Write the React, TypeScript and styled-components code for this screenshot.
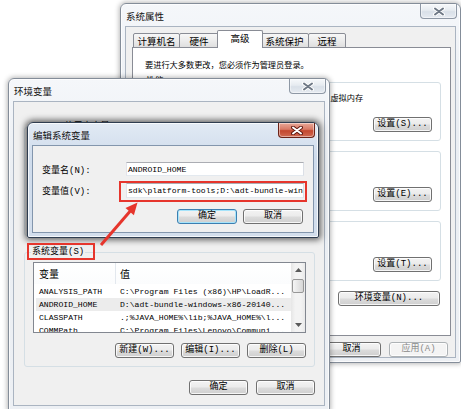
import React from "react";
import styled, { createGlobalStyle } from "styled-components";

const CJK = `"Noto Sans CJK SC", "Liberation Sans", sans-serif`;
const MONO = `"Liberation Mono", "Noto Sans CJK SC", monospace`;
const RED = "#e6352c";

const Global = createGlobalStyle`
  html, body { margin: 0; padding: 0; background: #fff; }
  * { box-sizing: border-box; }
`;

const Page = styled.div`
  position: relative;
  width: 461px;
  height: 409px;
  overflow: hidden;
  background: #fff;
  font-family: ${CJK};
  color: #000;
`;

/* ---------- window chrome ---------- */
const Frame = styled.div<{ $x: number; $y: number; $w: number; $h: number; $z: number; $active?: boolean }>`
  position: absolute;
  left: ${(p) => p.$x}px;
  top: ${(p) => p.$y}px;
  width: ${(p) => p.$w}px;
  height: ${(p) => p.$h}px;
  z-index: ${(p) => p.$z};
  display: flex;
  flex-direction: column;
  padding: 0 4px 4px;
  border: 1px solid ${(p) => (p.$active ? "#2f3d50" : "#848d99")};
  border-radius: 6px 6px 2px 2px;
  background: ${(p) =>
    p.$active
      ? "linear-gradient(#e2eaf4, #cfdcec 30%, #d3deec)"
      : "linear-gradient(#f5f7fa, #eaeef3 30%, #edf0f4)"};
  box-shadow: inset 0 0 0 1px rgba(255, 255, 255, 0.75),
    ${(p) => (p.$active ? "0 0 6px 2px rgba(0,0,0,0.6)" : "0 0 5px 1px rgba(0,0,0,0.28)")};
`;

const TitleBar = styled.div`
  height: 22px;
  flex-shrink: 0;
  display: flex;
  align-items: flex-start;
  justify-content: space-between;
`;

const Title = styled.div`
  font-family: ${CJK};
  font-size: 9.5px;
  line-height: 22px;
  margin-top: 1px;
  padding-left: 1px;
  color: #111;
  white-space: nowrap;
`;

const CloseBtn = styled.div<{ $active?: boolean }>`
  width: 37px;
  height: 15px;
  margin-right: -1px;
  display: flex;
  align-items: center;
  justify-content: center;
  border: 1px solid ${(p) => (p.$active ? "#6b2217" : "#8e98a5")};
  border-top: none;
  border-radius: 0 0 4px 4px;
  background: ${(p) =>
    p.$active
      ? "linear-gradient(#e9a898, #d87a66 45%, #c3472f 55%, #d06a52)"
      : "linear-gradient(#f7f9fb, #e6ebf0 45%, #d9e0e8 55%, #e6ebf1)"};
  box-shadow: inset 0 0 0 1px rgba(255, 255, 255, 0.45);
`;

const XIcon = ({ active }: { active?: boolean }) => (
  <svg width="12" height="9" viewBox="0 0 12 9">
    <path d="M2 1.5 L10 7.5 M10 1.5 L2 7.5" stroke={active ? "#5c140c" : "#ffffff"} strokeWidth="3.8" strokeLinecap="round" />
    <path d="M2 1.5 L10 7.5 M10 1.5 L2 7.5" stroke={active ? "#ffffff" : "#6f7986"} strokeWidth="2" strokeLinecap="round" />
  </svg>
);

const Client = styled.div<{ $active?: boolean }>`
  flex: 1;
  min-height: 0;
  background: #f0f0f0;
  border: 1px solid ${(p) => (p.$active ? "#8396ad" : "#aab4c1")};
  display: flex;
  flex-direction: column;
  overflow: hidden;
`;

/* ---------- common controls ---------- */
const Button = styled.button<{ $w: number; $default?: boolean; $disabled?: boolean }>`
  width: ${(p) => p.$w}px;
  height: 15px;
  flex-shrink: 0;
  padding: 0;
  margin: 0;
  display: flex;
  align-items: center;
  justify-content: center;
  font-family: ${MONO};
  font-size: 9px;
  line-height: 1;
  white-space: nowrap;
  color: ${(p) => (p.$disabled ? "#8a8a8a" : "#000")};
  border: 1px solid ${(p) => (p.$default ? "#3c7fb1" : p.$disabled ? "#adb2b5" : "#707070")};
  border-radius: 3px;
  background: ${(p) =>
    p.$disabled ? "#f4f4f4" : "linear-gradient(#f3f3f3 0%, #ebebeb 48%, #dcdcdc 52%, #cfcfcf 100%)"};
  box-shadow: inset 0 0 0 1px ${(p) => (p.$default ? "#a6e4fb" : "rgba(255,255,255,0.8)")};
`;

const Row = styled.div<{ $mt?: number; $gap: number; $pr?: number }>`
  display: flex;
  justify-content: flex-end;
  gap: ${(p) => p.$gap}px;
  margin-top: ${(p) => p.$mt ?? 0}px;
  padding-right: ${(p) => p.$pr ?? 0}px;
  flex-shrink: 0;
`;

const Group = styled.div<{ $mt: number; $h: number }>`
  position: relative;
  flex-shrink: 0;
  margin-top: ${(p) => p.$mt}px;
  height: ${(p) => p.$h}px;
  border: 1px solid #d5dfe5;
  border-radius: 3px;
  display: flex;
  flex-direction: column;
`;

const GroupLabel = styled.div<{ $bg: string }>`
  position: absolute;
  top: -7px;
  left: 6px;
  padding: 0 1px;
  background: ${(p) => p.$bg};
  font-family: ${MONO};
  font-size: 9px;
  line-height: 12px;
  white-space: nowrap;
`;

/* ---------- system properties (back) ---------- */
const BackBody = styled.div`
  flex: 1;
  display: flex;
  flex-direction: column;
  padding: 3px 4px 0 6px;
`;

const TabStrip = styled.div`
  position: relative;
  z-index: 2;
  height: 18px;
  margin-bottom: -1px;
  padding-left: 1px;
  display: flex;
  align-items: flex-end;
`;

const Tab = styled.div<{ $w: number; $active?: boolean }>`
  position: relative;
  z-index: ${(p) => (p.$active ? 2 : 1)};
  width: ${(p) => p.$w}px;
  height: ${(p) => (p.$active ? 18 : 15)}px;
  margin-left: ${(p) => (p.$active ? -2 : -1)}px;
  margin-right: ${(p) => (p.$active ? -2 : 0)}px;
  &:first-child {
    margin-left: 0;
  }
  border: 1px solid #898c95;
  border-bottom: ${(p) => (p.$active ? "none" : "1px solid #898c95")};
  border-radius: 2px 2px 0 0;
  background: ${(p) => (p.$active ? "#fff" : "linear-gradient(#f7f7f7, #ececec 50%, #dfdfdf)")};
  font-family: ${CJK};
  font-size: 9.5px;
  display: flex;
  align-items: center;
  justify-content: center;
  padding-bottom: ${(p) => (p.$active ? 3 : 0)}px;
  white-space: nowrap;
`;

const TabPanel = styled.div`
  position: relative;
  z-index: 1;
  flex: 1;
  background: #fff;
  border: 1px solid #898c95;
  padding: 10px 9px 0 5px;
  display: flex;
  flex-direction: column;
`;

const Note = styled.div`
  font-family: ${CJK};
  font-size: 8.2px;
  line-height: 12px;
  padding-left: 7px;
  white-space: nowrap;
`;

const PerfGroup = styled(Group)`
  padding: 0 8px 8px;
  justify-content: space-between;
`;

const GroupText = styled.div<{ $indent: number }>`
  margin-top: 8px;
  padding-left: ${(p) => p.$indent}px;
  font-family: ${CJK};
  font-size: 8.2px;
  line-height: 12px;
  white-space: nowrap;
`;

const RightButton = styled(Button)`
  align-self: flex-end;
`;

const EnvVarsButton = styled(Button)`
  align-self: flex-end;
  margin-top: 10px;
  margin-right: 1px;
`;

/* ---------- environment variables (middle) ---------- */
const EnvBody = styled.div`
  flex: 1;
  display: flex;
  flex-direction: column;
  padding: 0 9px 0 10px;
`;

const VarGroup = styled(Group)`
  padding: 9px 8px 0;
`;

const List = styled.div`
  height: 71px;
  flex-shrink: 0;
  border: 1px solid #828790;
  background: #fff;
  display: flex;
  overflow: hidden;
`;

const ListBody = styled.div`
  flex: 1;
  min-width: 0;
  overflow: hidden;
`;

const HeaderRow = styled.div`
  display: grid;
  grid-template-columns: 82px 1fr;
  height: 21px;
  margin-bottom: 1px;
  background: linear-gradient(#ffffff, #fbfcfd);
`;

const HeaderCell = styled.div<{ $pl: number; $divider?: boolean }>`
  font-family: ${CJK};
  font-size: 10px;
  line-height: 21px;
  padding-left: ${(p) => p.$pl}px;
  border-right: ${(p) => (p.$divider ? "1px solid #e3e8ee" : "none")};
`;

const ListRow = styled.div<{ $sel?: boolean }>`
  display: grid;
  grid-template-columns: 80px 1fr;
  height: 13px;
  margin-left: 2px;
  background: ${(p) => (p.$sel ? "#ececec" : "transparent")};
`;

const Cell = styled.div<{ $pl: number }>`
  font-family: ${MONO};
  font-size: 8.1px;
  line-height: 13px;
  padding-left: ${(p) => p.$pl}px;
  white-space: nowrap;
  overflow: hidden;
`;

const ScrollBar = styled.div`
  width: 14px;
  flex-shrink: 0;
  display: flex;
  flex-direction: column;
  align-items: center;
  background: linear-gradient(90deg, #e6e6e6, #f3f3f3 30%, #f3f3f3 70%, #e9e9e9);
`;

const ScrollArrow = styled.div`
  height: 14px;
  width: 100%;
  display: flex;
  align-items: center;
  justify-content: center;
`;

const Thumb = styled.div`
  margin-top: 2px;
  width: 12px;
  height: 14px;
  border: 1px solid #979797;
  border-radius: 2px;
  background: linear-gradient(90deg, #f5f5f5, #e6e6e6 50%, #d6d6d6);
`;

const ScrollSpacer = styled.div`
  flex: 1;
`;

/* ---------- edit dialog (front) ---------- */
const EditBody = styled.div`
  flex: 1;
  display: flex;
  flex-direction: column;
  padding: 16px 9px 0 9px;
`;

const FieldRow = styled.div<{ $mt: number; $h: number }>`
  display: grid;
  grid-template-columns: 84px 1fr;
  align-items: center;
  height: ${(p) => p.$h}px;
  margin-top: ${(p) => p.$mt}px;
  flex-shrink: 0;
`;

const FieldLabel = styled.div`
  font-family: ${MONO};
  font-size: 9px;
  white-space: nowrap;
`;

const Field = styled.div`
  height: 100%;
  background: #fff;
  border: 1px solid;
  border-color: #abadb3 #dbdfe6 #e3e9ef #e2e3ea;
  font-family: ${MONO};
  font-size: 8.1px;
  display: flex;
  align-items: center;
  padding-left: 1px;
  white-space: nowrap;
  overflow: hidden;
`;

/* ---------- annotations ---------- */
const RedBox = styled.div<{ $x: number; $y: number; $w: number; $h: number }>`
  position: absolute;
  left: ${(p) => p.$x}px;
  top: ${(p) => p.$y}px;
  width: ${(p) => p.$w}px;
  height: ${(p) => p.$h}px;
  border: 2px solid ${RED};
  z-index: 10;
  pointer-events: none;
`;

const ArrowSvg = styled.svg`
  position: absolute;
  left: 0;
  top: 0;
  z-index: 11;
  pointer-events: none;
`;

const TriUp = () => (
  <svg width="7" height="4" viewBox="0 0 7 4">
    <path d="M0 4 L3.5 0 L7 4 Z" fill="#5a5a5a" />
  </svg>
);
const TriDown = () => (
  <svg width="7" height="4" viewBox="0 0 7 4">
    <path d="M0 0 L3.5 4 L7 0 Z" fill="#5a5a5a" />
  </svg>
);

const rows = [
  { name: "ANALYSIS_PATH", value: "C:\\Program Files (x86)\\HP\\LoadR..." },
  { name: "ANDROID_HOME", value: "D:\\adt-bundle-windows-x86-20140...", sel: true },
  { name: "CLASSPATH", value: ".;%JAVA_HOME%\\lib;%JAVA_HOME%\\l..." },
  { name: "COMMPath", value: "C:\\Program Files\\Lenovo\\Communi..." },
];

export default function App() {
  return (
    <>
      <Global />
      <Page>
        {/* 系统属性 */}
        <Frame $x={120} $y={3} $w={341} $h={360} $z={1}>
          <TitleBar>
            <Title>系统属性</Title>
            <CloseBtn>
              <XIcon />
            </CloseBtn>
          </TitleBar>
          <Client>
            <BackBody>
              <TabStrip>
                <Tab $w={47}>计算机名</Tab>
                <Tab $w={40}>硬件</Tab>
                <Tab $w={46} $active>
                  高级
                </Tab>
                <Tab $w={49}>系统保护</Tab>
                <Tab $w={38}>远程</Tab>
              </TabStrip>
              <TabPanel>
                <Note>要进行大多数更改，您必须作为管理员登录。</Note>
                <PerfGroup $mt={12} $h={59}>
                  <GroupLabel $bg="#fff">性能</GroupLabel>
                  <GroupText $indent={36}>视觉效果，处理器计划，内存使用，以及虚拟内存</GroupText>
                  <RightButton $w={59}>设置(S)...</RightButton>
                </PerfGroup>
                <PerfGroup $mt={10} $h={60}>
                  <GroupLabel $bg="#fff">用户配置文件</GroupLabel>
                  <GroupText $indent={0}>与登录有关的桌面设置</GroupText>
                  <RightButton $w={59}>设置(E)...</RightButton>
                </PerfGroup>
                <PerfGroup $mt={10} $h={60}>
                  <GroupLabel $bg="#fff">启动和故障恢复</GroupLabel>
                  <GroupText $indent={0}>系统启动、系统失败和调试信息</GroupText>
                  <RightButton $w={59}>设置(T)...</RightButton>
                </PerfGroup>
                <EnvVarsButton $w={102}>环境变量(N)...</EnvVarsButton>
              </TabPanel>
              <Row $mt={6} $gap={8} $pr={3}>
                <Button $w={59}>确定</Button>
                <Button $w={59}>取消</Button>
                <Button $w={59} $disabled>
                  应用(A)
                </Button>
              </Row>
            </BackBody>
          </Client>
        </Frame>

        {/* 环境变量 */}
        <Frame $x={8} $y={78} $w={322} $h={333} $z={2}>
          <TitleBar>
            <Title>环境变量</Title>
            <CloseBtn>
              <XIcon />
            </CloseBtn>
          </TitleBar>
          <Client>
            <EnvBody>
              <VarGroup $mt={25} $h={109}>
                <GroupLabel $bg="#f0f0f0">xtian 的用户变量(U)</GroupLabel>
              </VarGroup>
              <VarGroup $mt={16} $h={115}>
                <GroupLabel $bg="#f0f0f0">系统变量(S)</GroupLabel>
                <List>
                  <ListBody>
                    <HeaderRow>
                      <HeaderCell $pl={5} $divider>
                        变量
                      </HeaderCell>
                      <HeaderCell $pl={4}>值</HeaderCell>
                    </HeaderRow>
                    {rows.map((r) => (
                      <ListRow key={r.name} $sel={r.sel}>
                        <Cell $pl={3}>{r.name}</Cell>
                        <Cell $pl={4}>{r.value}</Cell>
                      </ListRow>
                    ))}
                  </ListBody>
                  <ScrollBar>
                    <ScrollArrow>
                      <TriUp />
                    </ScrollArrow>
                    <Thumb />
                    <ScrollSpacer />
                    <ScrollArrow>
                      <TriDown />
                    </ScrollArrow>
                  </ScrollBar>
                </List>
                <Row $mt={10} $gap={7}>
                  <Button $w={59}>新建(W)...</Button>
                  <Button $w={59}>编辑(I)...</Button>
                  <Button $w={59}>删除(L)</Button>
                </Row>
              </VarGroup>
              <Row $mt={13} $gap={8}>
                <Button $w={59}>确定</Button>
                <Button $w={59}>取消</Button>
              </Row>
            </EnvBody>
          </Client>
        </Frame>

        {/* 编辑系统变量 */}
        <Frame $x={27} $y={122} $w={292} $h={116} $z={3} $active>
          <TitleBar>
            <Title>编辑系统变量</Title>
            <CloseBtn $active>
              <XIcon active />
            </CloseBtn>
          </TitleBar>
          <Client $active>
            <EditBody>
              <FieldRow $mt={0} $h={14}>
                <FieldLabel>变量名(N):</FieldLabel>
                <Field>ANDROID_HOME</Field>
              </FieldRow>
              <FieldRow $mt={7} $h={15}>
                <FieldLabel>变量值(V):</FieldLabel>
                <Field>sdk\platform-tools;D:\adt-bundle-windows-x86-20140321\sdk\tools</Field>
              </FieldRow>
              <Row $mt={11} $gap={6} $pr={1}>
                <Button $w={60} $default>
                  确定
                </Button>
                <Button $w={60}>取消</Button>
              </Row>
            </EditBody>
          </Client>
        </Frame>

        {/* annotations */}
        <RedBox $x={119} $y={181} $w={188} $h={21} />
        <RedBox $x={27} $y={243} $w={68} $h={17} />
        <ArrowSvg width="461" height="409" viewBox="0 0 461 409">
          <line x1="101" y1="245" x2="130.5" y2="210.7" stroke={RED} strokeWidth="3" />
          <polygon points="137.5,202.5 133.9,215.2 125.5,208.0" fill={RED} />
        </ArrowSvg>
      </Page>
    </>
  );
}
